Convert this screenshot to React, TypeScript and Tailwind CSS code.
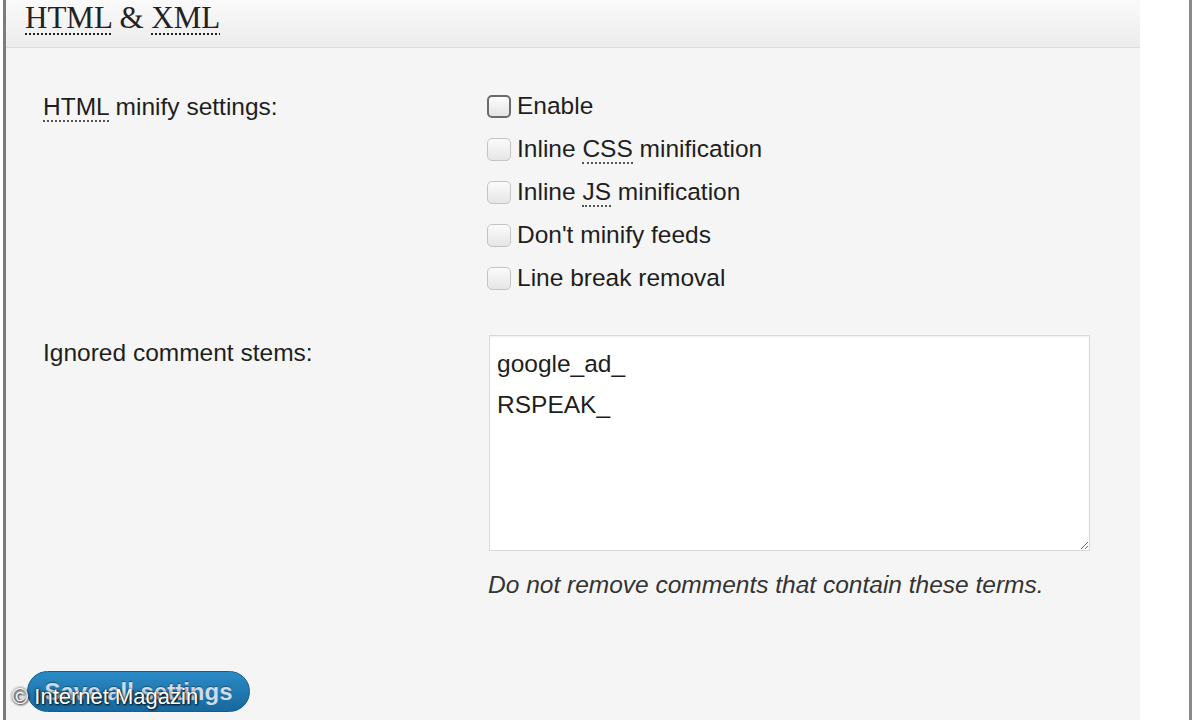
import React from 'react';

const sans = { fontFamily: '"Liberation Sans", Arial, sans-serif' };
const serif = { fontFamily: '"Liberation Serif", "Times New Roman", serif' };

function Abbr({ children, title }: { children: React.ReactNode; title?: string }) {
  return (
    <abbr
      title={title}
      className="no-underline border-b-2 border-dotted border-[#555]"
    >
      {children}
    </abbr>
  );
}

function Checkbox({ label, focused }: { label: React.ReactNode; focused?: boolean }) {
  return (
    <label className="flex h-[43px] items-center gap-[6px]">
      <span
        className={
          focused
            ? 'h-[23px] w-[24px] rounded-[5px] border-2 border-[#6b6b6b] bg-gradient-to-b from-[#fdfdfd] to-[#e4e4e4]'
            : 'h-[23px] w-[24px] rounded-[5px] border border-[#c4c4c4] bg-gradient-to-b from-[#fbfbfb] to-[#e6e6e6]'
        }
      />
      <span>{label}</span>
    </label>
  );
}

export default function App() {
  return (
    <div className="relative flex h-[720px] w-[1200px] overflow-hidden bg-white text-[#1e1e1e]" style={sans}>
      {/* left frame */}
      <div className="ml-[3px] w-[3px] bg-[#7c7c7c]" />

      {/* Settings panel */}
      <div className="flex w-[1134px] flex-col bg-[#f5f5f5]">
        <div className="h-[48px] border-b border-[#dcdcdc] bg-gradient-to-b from-[#fafafa] to-[#ececec] pl-[19px] pt-[2px]">
          <h3 className="text-[31px] leading-[32px] text-[#222]" style={serif}>
            <abbr title="Hypertext Markup Language" className="no-underline underline decoration-dotted decoration-2 underline-offset-[5px]">HTML</abbr>
            {' & '}
            <abbr title="eXtensible Markup Language" className="no-underline underline decoration-dotted decoration-2 underline-offset-[5px]">XML</abbr>
          </h3>
        </div>

        <div className="pl-[37px] pt-[37px] text-[24.5px]">
          {/* HTML minify settings */}
          <div className="grid grid-cols-[444px_1fr]">
            <div className="leading-[43px]">
              <Abbr title="Hypertext Markup Language">HTML</Abbr> minify settings:
            </div>
            <div className="flex flex-col">
              <Checkbox focused label="Enable" />
              <Checkbox label={<>Inline <Abbr title="Cascading Style Sheets">CSS</Abbr> minification</>} />
              <Checkbox label={<>Inline <Abbr title="JavaScript">JS</Abbr> minification</>} />
              <Checkbox label="Don't minify feeds" />
              <Checkbox label="Line break removal" />
            </div>
          </div>

          {/* Ignored comment stems */}
          <div className="mt-[35px] grid grid-cols-[444px_1fr]">
            <div className="leading-[36px]">Ignored comment stems:</div>
            <div className="pl-[2px]">
              <textarea
                className="block h-[216px] w-[601px] border border-[#d9d9d9] bg-white px-[7px] py-[7px] text-[24.5px] leading-[41px] text-[#1e1e1e] shadow-[inset_0_1px_2px_rgba(0,0,0,0.07)] outline-none"
                style={sans}
                defaultValue={'google_ad_\nRSPEAK_'}
              />
              <p className="-ml-[1px] mt-[19px] text-[24.5px] italic leading-[30px] text-[#333]">
                Do not remove comments that contain these terms.
              </p>
            </div>
          </div>
        </div>

        <div className="mt-[71px] pl-[21px]">
          <button className="h-[41px] w-[223px] rounded-full border border-[#155d8c] bg-gradient-to-b from-[#2b8bc6] to-[#17689e] text-[24px] font-bold leading-[39px] text-[#cfdbe6] [text-shadow:0_-1px_0_rgba(0,0,0,0.35)]">
            Save all settings
          </button>
        </div>
      </div>

      {/* right frame */}
      <div className="w-[49px] bg-white" />
      <div className="w-[3px] bg-[#8a8a8a]" />

      {/* watermark */}
      <div className="absolute left-[12px] top-[683px] text-[22px] leading-[28px] text-white [text-shadow:0_0_3px_rgba(0,0,0,0.9),1px_1px_2px_rgba(0,0,0,0.8)]">
        © Internet Magazin
      </div>
    </div>
  );
}
